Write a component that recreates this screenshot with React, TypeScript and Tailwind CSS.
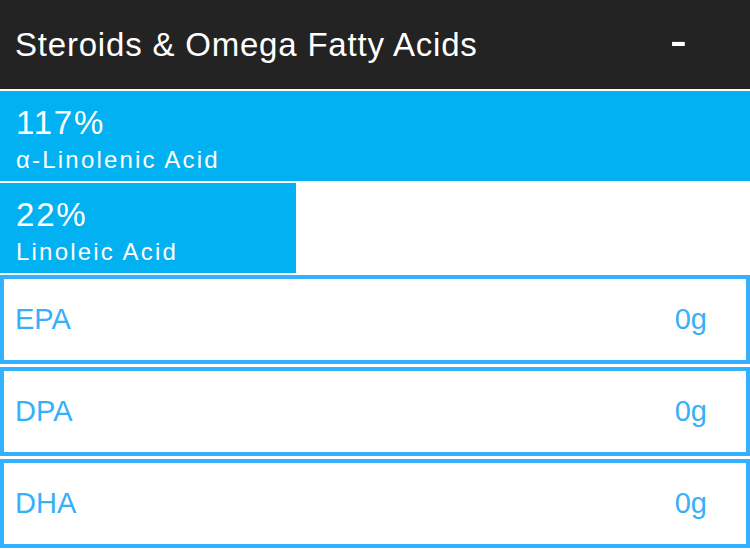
const bars = [
  { pct: '117%', name: 'α-Linolenic Acid', width: '750px' },
  { pct: '22%', name: 'Linoleic Acid', width: '296px' },
];

const rows = [
  { name: 'EPA', amount: '0g' },
  { name: 'DPA', amount: '0g' },
  { name: 'DHA', amount: '0g' },
];

function BarRow({ pct, name, width }: { pct: string; name: string; width: string }) {
  return (
    <div className="h-[90px] bg-[#02b1f1] pl-[16px] pt-[15px] text-white" style={{ width }}>
      <div className="text-[33px] leading-[33px] tracking-[1.8px]">{pct}</div>
      <div className="mt-[9px] text-[24px] leading-[24px] tracking-[2.2px]">{name}</div>
    </div>
  );
}

export default function App() {
  return (
    <div
      className="w-[750px] h-[549px] bg-white overflow-hidden"
      style={{ fontFamily: '"Liberation Sans", Arial, sans-serif' }}
    >
      <div className="h-[89px] bg-[#232323] flex items-center justify-between pl-[15px] pr-[63px] text-white">
        <span className="text-[33px] leading-[33px] tracking-[0.8px]">Steroids &amp; Omega Fatty Acids</span>
        <span className="text-[52px] leading-[52px] pb-[9px]">-</span>
      </div>

      <div className="mt-[2px] flex flex-col gap-[2px]">
        {bars.map((b) => (
          <BarRow key={b.name} {...b} />
        ))}
      </div>

      <div className="mt-[2px] flex flex-col gap-[3px]">
        {rows.map((r) => (
          <div
            key={r.name}
            className="h-[89px] w-full border-4 border-[#33b1fe] flex items-center justify-between pl-[11px] pr-[39px] text-[#38b0f9] text-[29px] leading-[29px]"
          >
            <span>{r.name}</span>
            <span>{r.amount}</span>
          </div>
        ))}
      </div>
    </div>
  );
}
